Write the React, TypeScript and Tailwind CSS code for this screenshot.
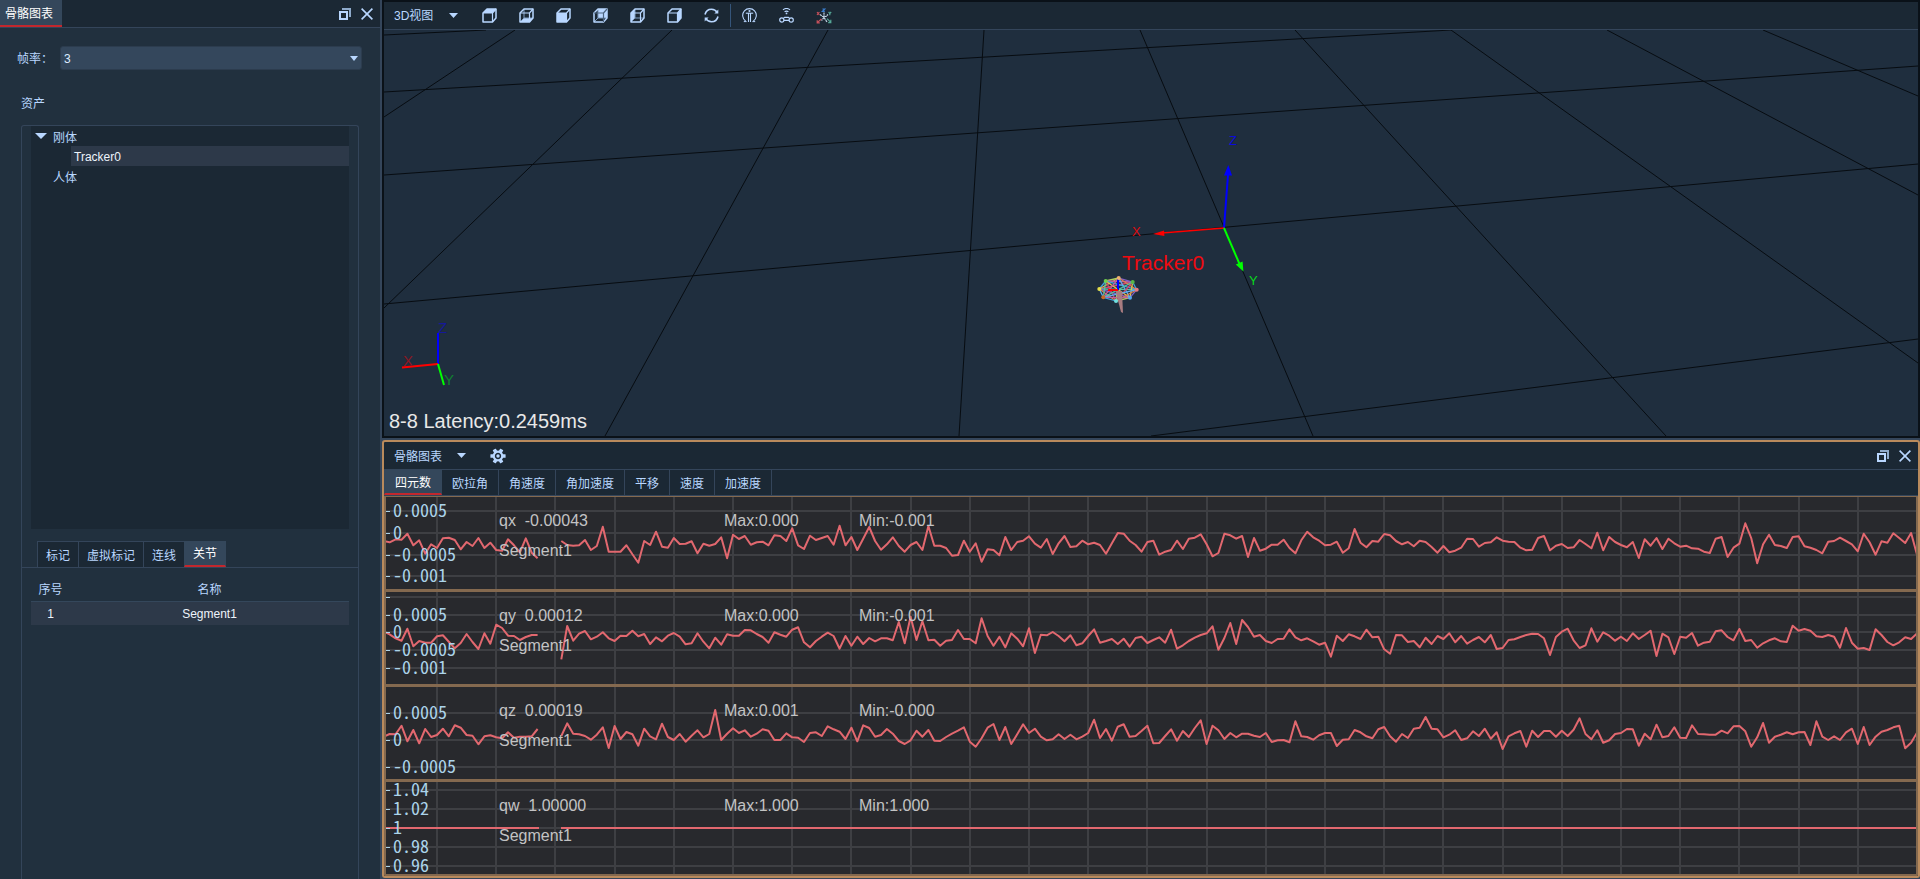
import type { ReactNode } from "react";

const QX_HEAD = [153,157,148,149,131,166,151,191,163,174,145,143,150,178,156,168,144,174,158,180,182,148,166,187,145,188,205];
const QX_TAIL = [
  153,165,167,166,150,180,168,110,185,185,185,166,193,218,153,165,125,170,173,144,162,161,154,190,161,167,162,142,205,134,
  147,138,164,157,155,166,136,138,153,115,166,177,137,150,144,138,164,107,166,141,180,146,111,153,179,163,142,168,185,165,
  156,180,108,167,167,174,197,195,152,185,160,215,178,180,196,141,180,156,152,139,161,173,147,192,160,138,171,169,152,163,
  158,165,191,160,129,131,152,165,185,156,152,194,185,180,152,177,146,143,133,163,199,189,131,136,146,138,201,144,182,176,
  164,164,149,174,190,151,125,142,152,166,164,155,188,175,117,158,172,153,155,132,136,153,163,156,169,152,156,171,188,168,
  187,182,173,146,147,170,159,157,142,152,155,156,173,181,179,144,138,181,167,162,174,172,150,162,175,128,181,141,156,165,
  172,156,204,148,167,144,177,146,160,170,167,175,176,185,189,146,141,201,173,161,100,144,220,163,134,165,168,174,141,139,
  169,173,180,190,155,153,143,153,163,184,131,157,194,154,158,130,144,159,129,194,
];
const QY_HEAD = [425,433,445,452,416,469,453,458,458,439,436,455,475,459,432,456,477,430,461,404,414,437,438,450,441,435,435];
const QY_TAIL = [
  508,408,452,431,423,448,440,427,445,453,437,438,422,439,432,462,442,454,437,429,440,463,460,430,455,475,443,464,433,437,
  437,420,421,432,441,458,427,434,440,419,412,457,472,453,440,428,438,476,438,467,440,462,444,454,445,445,451,396,460,380,
  450,394,451,449,467,452,450,420,447,447,460,385,438,467,440,472,430,446,469,415,489,434,436,426,438,454,436,466,460,438,
  418,458,453,447,462,446,470,444,440,459,450,442,458,419,476,466,453,443,435,430,409,479,444,399,462,390,411,440,435,453,
  459,447,446,418,442,451,445,454,464,458,500,437,453,433,439,447,419,442,440,478,491,435,436,456,453,472,443,462,438,447,
  430,457,438,461,450,441,457,435,477,474,450,448,441,435,431,432,445,495,441,425,416,451,474,466,415,455,427,437,452,440,
  453,430,447,435,422,498,431,442,492,440,443,429,467,458,455,424,421,441,451,417,453,450,473,460,451,445,454,456,407,422,
  417,422,439,441,435,440,473,414,458,476,474,480,418,435,456,466,457,442,447,430,
];
const QZ_HEAD = [170,162,163,137,184,150,190,147,171,165,146,169,136,143,165,167,193,169,166,172,175,157,173,170,170,169,147];
const QZ_TAIL = [
  168,130,161,163,168,179,164,142,204,138,177,156,163,197,146,169,178,131,171,180,162,185,167,151,172,162,90,180,161,145,
  159,151,170,161,148,152,180,180,160,172,173,186,159,157,168,139,148,155,177,143,184,136,144,170,165,147,161,183,192,181,
  152,170,150,182,183,171,161,152,142,185,200,175,143,132,180,141,192,163,133,159,146,170,181,178,163,177,164,178,170,159,
  119,174,147,182,140,133,170,168,153,137,190,189,168,148,182,153,171,144,121,192,137,151,177,159,172,161,161,167,171,159,
  186,181,180,187,124,169,171,179,166,159,159,198,179,178,150,157,169,175,148,141,169,185,162,174,146,143,111,146,148,172,
  164,151,180,175,154,168,146,176,157,207,169,160,153,200,152,171,153,153,170,152,168,149,115,162,178,151,188,181,162,159,
  147,148,197,161,178,134,172,168,142,173,174,136,162,163,164,164,152,160,139,138,154,200,172,129,188,170,164,157,163,157,
  156,195,124,170,180,169,180,157,146,192,141,195,170,155,150,142,137,205,188,158,
];

const GRID_X = Array.from({ length: 26 }, (_, i) => Math.round(51 + i * 59.2));
const STEP = 5.92;
const HEAD_X = 51 - 9 * STEP;
const TAIL_X = 51 + 21 * STEP;

type Tick = { y: number; label?: string };
type Channel = {
  name: string;
  value: string;
  max: string;
  min: string;
  ticks: Tick[];
  base: number;
  head?: number[];
  tail?: number[];
};

const CHANNELS: Channel[] = [
  {
    name: "qx", value: "-0.00043", max: "0.000", min: "-0.001", base: 21, head: QX_HEAD, tail: QX_TAIL,
    ticks: [{ y: 14, label: "0.0005" }, { y: 36, label: "0" }, { y: 58, label: "-0.0005" }, { y: 79, label: "-0.001" }],
  },
  {
    name: "qy", value: "0.00012", max: "0.000", min: "-0.001", base: 306, head: QY_HEAD, tail: QY_TAIL,
    ticks: [{ y: 5 }, { y: 23, label: "0.0005" }, { y: 40, label: "0" }, { y: 58, label: "-0.0005" }, { y: 76, label: "-0.001" }],
  },
  {
    name: "qz", value: "0.00019", max: "0.001", min: "-0.000", base: 21, head: QZ_HEAD, tail: QZ_TAIL,
    ticks: [{ y: 26, label: "0.0005" }, { y: 53, label: "0" }, { y: 80, label: "-0.0005" }],
  },
  {
    name: "qw", value: "1.00000", max: "1.000", min: "1.000", base: 0,
    ticks: [
      { y: 8, label: "1.04" }, { y: 27, label: "1.02" }, { y: 46, label: "1" }, { y: 65, label: "0.98" }, { y: 84, label: "0.96" },
    ],
  },
];

function linePoints(values: number[], startX: number, base: number) {
  return values.map((v, i) => `${(startX + i * STEP).toFixed(1)},${((v - base) / 3).toFixed(1)}`).join(" ");
}

function Chart({ channel }: { channel: Channel }) {
  const { name, value, max, min, ticks, base, head, tail } = channel;
  return (
    <div className="h-[95px] overflow-hidden border-x-2 border-t border-b-2 border-[#84694f] bg-[#28292d]">
      <svg className="block h-full w-full" role="img" aria-label={name}>
        <g stroke="#3e3f43" strokeWidth="2">
          {GRID_X.map((x) => (
            <line key={x} x1={x} x2={x} y1="0" y2="100%" />
          ))}
          {ticks.map((t) => (
            <line key={t.y} x1="0" x2="100%" y1={t.y} y2={t.y} />
          ))}
        </g>
        <g fill="none" stroke="#e2686f" strokeWidth="2" strokeLinejoin="round">
          {head && tail ? (
            <>
              <polyline points={linePoints(head, HEAD_X, base)} />
              <polyline points={linePoints(tail, TAIL_X, base)} />
            </>
          ) : (
            <>
              <line x1="0" x2="153" y1="46" y2="46" />
              <line x1="175" x2="100%" y1="46" y2="46" />
            </>
          )}
        </g>
        <g
          fill="#acd4ea"
          className="text-[18px] [font-family:'Noto_Sans_CJK_SC',monospace] [font-feature-settings:'hwid']"
        >
          {ticks.map((t) => (
            <g key={t.y}>
              <rect x="0" y={t.y} width="4" height="1" />
              {t.label && (
                <text x="7" y={t.y + 6}>
                  {t.label}
                </text>
              )}
            </g>
          ))}
        </g>
        <g fill="#c3c3c4" className="text-base [font-family:'Liberation_Sans',sans-serif]">
          <text x="113" y="29">{`${name}\u00a0\u00a0${value}`}</text>
          <text x="338" y="29">{`Max:${max}`}</text>
          <text x="473" y="29">{`Min:${min}`}</text>
          <text x="113" y="59">Segment1</text>
        </g>
      </svg>
    </div>
  );
}

function RestoreIcon() {
  return (
    <svg width="12" height="12" viewBox="0 0 12 12" fill="none">
      <path d="M3 1H11V9" stroke="#8fabcc" strokeWidth="2" />
      <rect x="1" y="4" width="7" height="7" stroke="#b9d7ff" strokeWidth="2" />
    </svg>
  );
}

function CloseIcon() {
  return (
    <svg width="12" height="12" viewBox="0 0 12 12" fill="none" stroke="#b9d7ff" strokeWidth="1.6">
      <path d="M.6 .6L11.4 11.4M11.4 .6L.6 11.4" />
    </svg>
  );
}

function Caret() {
  return (
    <svg width="9" height="5" viewBox="0 0 9 5" fill="#b9d7ff">
      <path d="M0 0H9L4.5 5Z" />
    </svg>
  );
}

function WindowButtons() {
  return (
    <div className="flex items-center gap-2.5">
      <button aria-label="还原" className="block">
        <RestoreIcon />
      </button>
      <button aria-label="关闭" className="block">
        <CloseIcon />
      </button>
    </div>
  );
}

const CUBE_FACES: Record<string, string> = {
  top: "M1 5L5 1H14L10.5 5Z",
  bottom: "M1 14L5 10H14L10.5 14Z",
  front: "M1 5H10.5V14H1Z",
  back: "M5 1H14V10H5Z",
  left: "M1 5L5 1V10L1 14Z",
  right: "M10.5 5L14 1V10L10.5 14Z",
};

function CubeIcon({ face }: { face: string }) {
  const hidden = face === "bottom" || face === "back" || face === "left";
  return (
    <svg width="15" height="15" viewBox="0 0 15 15" fill="none" stroke="#b9d7ff" strokeLinejoin="round">
      <path d={CUBE_FACES[face]} fill="#b9d7ff" stroke="none" />
      {hidden && <path d="M5 1V10H14M5 10L1 14" stroke="#7f9cc0" strokeWidth="1" />}
      <path d="M1 5L5 1H14V10L10.5 14H1Z" strokeWidth="1.5" />
      <path
        d="M1 5H10.5V14M10.5 5L14 1"
        strokeWidth="1.2"
        stroke={face === "back" ? "#4c6480" : "#b9d7ff"}
      />
    </svg>
  );
}

function RefreshIcon() {
  return (
    <svg width="15" height="15" viewBox="0 0 15 15" fill="none" stroke="#b9d7ff" strokeWidth="1.6">
      <path d="M1 6.5C1.8 3.2 4.5 1.2 7.5 1.2C10 1.2 12 2.5 13.3 4.6" />
      <path d="M14 8.5C13.2 11.8 10.5 13.8 7.5 13.8C5 13.8 3 12.5 1.7 10.4" />
      <path d="M14.3 1.6V5.4H10.4Z" fill="#b9d7ff" stroke="none" />
      <path d="M.7 13.4V9.6H4.6Z" fill="#b9d7ff" stroke="none" />
    </svg>
  );
}

function PoseIcon() {
  return (
    <svg width="15" height="15" viewBox="0 0 15 15" fill="none" stroke="#b9d7ff">
      <path d="M3.6 13A6.8 6.8 0 1 1 11.4 13" strokeWidth="1.1" />
      <path d="M1.8 13.6H4.6M13.2 13.6H10.4" strokeWidth="1" />
      <circle cx="7.5" cy="3" r="1.1" fill="#b9d7ff" stroke="none" />
      <path d="M3.8 5.2H11.2" strokeWidth="1.1" />
      <path d="M6.5 5V14M8.5 5V14" strokeWidth="1.1" />
    </svg>
  );
}

function TrackerIcon() {
  return (
    <svg width="15" height="15" viewBox="0 0 15 15" fill="none" stroke="#b9d7ff" strokeWidth="1.2">
      <path d="M4 1.9C6 .3 9 .3 11 1.9M5.6 3.8C6.8 2.8 8.2 2.8 9.4 3.8" />
      <circle cx="7.5" cy="5.4" r=".9" fill="#b9d7ff" stroke="none" />
      <circle cx="2.8" cy="12" r="2.1" />
      <circle cx="12.2" cy="12" r="2.1" />
      <path d="M4.4 10.4L5.6 9.4H9.4L10.6 10.4M5 12.4H10" />
    </svg>
  );
}

function SkeletonAxesIcon() {
  return (
    <svg width="16" height="16" viewBox="0 0 16 16" fill="none" strokeWidth="1.2">
      <path d="M8 4.5V9.5L11 14M8 9.5L5.5 12.5M4 6.5L6.5 8.5H10L12 6.5" stroke="#c3d4e4" strokeDasharray="2.2 .5" />
      <path d="M6.4 1H8.8L6.4 3.4H8.8" stroke="#3a7fd0" />
      <path d="M1 4L3.4 7M3.4 4L1 7M5.4 11L1.2 14.6M1.2 12.2V14.8H3.8" stroke="#c8515c" />
      <path d="M12.6 4L13.8 5.4L15.2 4M13.8 5.4V7.2M11 10.6L14.6 14.2M14.8 11.8V14.6H12.2" stroke="#56a898" />
    </svg>
  );
}

function GearIcon() {
  return (
    <svg width="16" height="16" viewBox="-8 -8 16 16">
      <g fill="#b9d7ff">
        {[0, 60, 120, 180, 240, 300].map((a) => (
          <rect key={a} x="-1.8" y="-7.6" width="3.6" height="4" rx=".5" transform={`rotate(${a + 30})`} />
        ))}
      </g>
      <circle r="4.3" fill="none" stroke="#b9d7ff" strokeWidth="2.2" />
      <circle r="1.7" fill="#b9d7ff" />
    </svg>
  );
}

const TOOLS: { label: string; icon: ReactNode; divided?: boolean }[] = [
  { label: "俯视图", icon: <CubeIcon face="top" /> },
  { label: "仰视图", icon: <CubeIcon face="bottom" /> },
  { label: "前视图", icon: <CubeIcon face="front" /> },
  { label: "后视图", icon: <CubeIcon face="back" /> },
  { label: "左视图", icon: <CubeIcon face="left" /> },
  { label: "右视图", icon: <CubeIcon face="right" /> },
  { label: "重置视图", icon: <RefreshIcon /> },
  { label: "人体姿态", icon: <PoseIcon />, divided: true },
  { label: "追踪器", icon: <TrackerIcon /> },
  { label: "骨骼坐标轴", icon: <SkeletonAxesIcon /> },
];

const FLOOR_LINES = [
  [384, 117, 515, 30], [384, 308, 672, 30], [605, 436, 828, 30], [959, 436, 984, 30], [1313, 436, 1140, 30],
  [1666, 436, 1295, 30], [1918, 363, 1451, 30], [1918, 195, 1607, 30], [1918, 96, 1763, 30],
  [384, 35, 486, 30], [384, 92, 1451, 30], [384, 175, 1918, 66], [384, 304, 1918, 164], [1151, 436, 1918, 339],
];

const MARKERS: [number, number, string][] = [
  [1099.3, 289, "#e6e04a"], [1105.7, 281, "#6fd24a"], [1118.7, 278, "#f0b070"], [1132.7, 282, "#58b848"],
  [1136.7, 289.7, "#e87a80"], [1130, 297.7, "#58a8f0"], [1116, 301, "#70e0e0"], [1103.3, 297.3, "#c86a28"],
];
const LINK_COLORS = ["#3fa0d8", "#e0c050", "#d04870", "#58c0a0", "#8060c8", "#e08050", "#60b0f0", "#b0d060", "#c060a0"];

function Scene() {
  const links = MARKERS.flatMap((a, i) => MARKERS.slice(i + 1).map((b) => [a, b] as const));
  return (
    <svg
      className="block h-full w-full"
      viewBox="384 30 1534 406"
      preserveAspectRatio="xMinYMin slice"
      role="img"
      aria-label="3D视图"
    >
      <g stroke="#070c11" strokeWidth="1">
        {FLOOR_LINES.map(([x1, y1, x2, y2], i) => (
          <line key={i} x1={x1} y1={y1} x2={x2} y2={y2} />
        ))}
      </g>
      <g strokeWidth="2">
        <path d="M1224 228L1228 175" stroke="#0000ff" />
        <path d="M1224 228L1162 233" stroke="#ff0000" strokeWidth="1.6" />
        <path d="M1224 228L1240 265" stroke="#00ff00" />
      </g>
      <path d="M1228.3 165L1232 175.5H1224Z" fill="#0000ff" />
      <path d="M1153 234L1164 230.6L1164.4 236Z" fill="#ff0000" />
      <path d="M1243.4 271.5L1235.8 264.4L1242.6 261.4Z" fill="#00ff00" />

      <g strokeWidth="1.3">
        {links.map(([a, b], i) => (
          <line key={i} x1={a[0]} y1={a[1]} x2={b[0]} y2={b[1]} stroke={LINK_COLORS[i % LINK_COLORS.length]} />
        ))}
      </g>
      <path d="M1115.5 291L1122 291L1123 313L1121 312Z" fill="#a87c80" />
      <path d="M1118 278V290" stroke="#0000ff" strokeWidth="2" />
      <path d="M1108 290H1118" stroke="#ff0000" strokeWidth="2" />
      {MARKERS.map(([x, y, color]) => (
        <circle key={color} cx={x} cy={y} r="2" fill={color} />
      ))}

      <g fill="none" strokeWidth="2">
        <path d="M438 364V333" stroke="#0000ff" />
        <path d="M438 364L402 367.5" stroke="#ff0000" />
        <path d="M438 364L444 385" stroke="#00ff00" />
      </g>
      <g className="[font-family:'Liberation_Sans',sans-serif]">
        <g className="text-[15px]">
          <text x="438" y="333" fill="#15189a">Z</text>
          <text x="403" y="366" fill="#8a1824">X</text>
          <text x="444" y="385" fill="#118030">Y</text>
        </g>
        <g className="text-[13px]">
          <text x="1229" y="145" fill="#0b0bdc">Z</text>
          <text x="1132" y="236" fill="#dd0c10">X</text>
          <text x="1249" y="285" fill="#08d81c">Y</text>
        </g>
        <text x="1122" y="270" fill="#f00a10" className="text-[21px]">Tracker0</text>
        <text x="389" y="428" fill="#e8e8e8" className="text-[20px]">8-8 Latency:0.2459ms</text>
      </g>
    </svg>
  );
}

const ASSET_TABS = ["标记", "虚拟标记", "连线", "关节"];
const CHART_TABS = ["四元数", "欧拉角", "角速度", "角加速度", "平移", "速度", "加速度"];

function AssetPanel() {
  return (
    <aside className="flex w-[382px] shrink-0 flex-col border-r-2 border-[#34455a] bg-[#21303e]">
      <header className="flex h-7 items-stretch justify-between border-b border-[#34455a] bg-[#1b2834] pr-[7px]">
        <h1 className="flex w-[62px] items-center border-b-2 border-[#c3272d] bg-[#34475b] pt-0.5 pl-[5px] text-white">骨骼图表</h1>
        <WindowButtons />
      </header>

      <div className="flex items-center pt-[18px] pr-[18px] pl-[17px]">
        <label htmlFor="rate" className="w-[43px] pt-0.5">帧率：</label>
        <div className="relative flex-1">
          <select
            id="rate"
            defaultValue="3"
            className="block h-6 w-full appearance-none rounded-[3px] border border-[#2c3c4e] bg-[#34475c] px-[3px] pt-0.5 text-[#dcebff] outline-none"
          >
            <option>1</option>
            <option>2</option>
            <option>3</option>
          </select>
          <svg className="pointer-events-none absolute top-2.5 right-1" width="8" height="5" viewBox="0 0 8 5" fill="#b9d7ff">
            <path d="M0 0H8L4 5Z" />
          </svg>
        </div>
      </div>

      <h2 className="mt-6 pt-px pl-[21px] leading-[18px]">资产</h2>

      <section className="mx-[21px] mt-3 flex flex-1 flex-col rounded-t-[3px] border border-b-0 border-[#34455a]">
        <ul className="mx-[9px] h-[403px] bg-[#1b2834]">
          <li>
            <button className="flex h-5 w-full items-center gap-1.5 pl-1">
              <svg width="12" height="6" viewBox="0 0 12 6" fill="#b9d7ff">
                <path d="M0 0H12L6 6Z" />
              </svg>
              <span className="pt-1">刚体</span>
            </button>
            <ul className="pl-10">
              <li>
                <button className="flex h-5 w-full items-center bg-[#2d3949] pt-0.5 pl-[3px] text-[#eef4fb]">Tracker0</button>
              </li>
            </ul>
          </li>
          <li>
            <button className="flex h-5 w-full items-center pt-1 pl-[22px]">人体</button>
          </li>
        </ul>

        <div role="tablist" className="mt-3 flex h-[27px] border-b border-[#34455a] pl-[15px]">
          {ASSET_TABS.map((tab, i) => (
            <button
              key={tab}
              role="tab"
              aria-selected={i === 3}
              className={
                i === 3
                  ? "border border-b-2 border-[#34475b] border-b-[#c3272d] bg-[#34475b] px-2 pt-px text-white"
                  : "border-t border-l border-[#34455a] bg-[#1b2834] px-2 pt-0.5"
              }
            >
              {tab}
            </button>
          ))}
        </div>

        <div className="mx-[9px] mt-[11px]">
          <table className="w-full border-collapse">
            <thead>
              <tr className="h-[22px] border-b border-[#34475b]">
                <th className="w-[39px] p-0 font-normal">序号</th>
                <th className="p-0 font-normal">名称</th>
              </tr>
            </thead>
            <tbody>
              <tr className="h-6 bg-[#2d3949] text-center text-[#eef4fb]">
                <td className="p-0 pt-0.5">1</td>
                <td className="p-0 pt-0.5">Segment1</td>
              </tr>
            </tbody>
          </table>
        </div>
      </section>
    </aside>
  );
}

function ViewPanel() {
  return (
    <section className="flex min-h-0 flex-1 flex-col border-2 border-[#0a1118]">
      <div className="flex h-7 shrink-0 items-stretch border-b border-[#34455a] bg-[#1b2834]">
        <button className="flex w-[87px] items-center gap-4 pl-2.5">
          3D视图
          <Caret />
        </button>
        {TOOLS.map((tool) => (
          <button
            key={tool.label}
            aria-label={tool.label}
            className={
              tool.divided
                ? "relative flex w-[38px] items-center justify-center before:absolute before:inset-y-0.5 before:left-0 before:w-px before:bg-[#35557a]"
                : "flex w-[37px] items-center justify-center"
            }
          >
            {tool.icon}
          </button>
        ))}
      </div>
      <div className="min-h-0 flex-1 bg-[#1f2e3e]">
        <Scene />
      </div>
    </section>
  );
}

function ChartPanel() {
  return (
    <section className="mt-0.5 mb-px shrink-0 overflow-hidden rounded-[3px] border-2 border-[#b98a5c] bg-[#1b2834]">
      <header className="flex h-7 items-center justify-between border-b border-[#34455a] pr-[7px] pl-2.5">
        <div className="flex items-center">
          <button className="flex items-center gap-[15px]">
            <span className="pt-0.5">骨骼图表</span>
            <Caret />
          </button>
          <button aria-label="设置" className="ml-6">
            <GearIcon />
          </button>
        </div>
        <WindowButtons />
      </header>
      <div role="tablist" className="flex h-[26px] border-b border-[#34455a]">
        {CHART_TABS.map((tab, i) => (
          <button
            key={tab}
            role="tab"
            aria-selected={i === 0}
            className={
              i === 0
                ? "border-x border-b-2 border-[#34475b] border-b-[#c3272d] bg-[#34475b] px-2.5 pt-0.5 text-white"
                : "border-r border-[#34455a] px-2.5 pt-0.5"
            }
          >
            {tab}
          </button>
        ))}
      </div>
      {CHANNELS.map((channel) => (
        <Chart key={channel.name} channel={channel} />
      ))}
    </section>
  );
}

export default function App() {
  return (
    <div className="flex min-h-screen bg-[#34455a] text-xs text-[#b9d7ff] [font-family:'Liberation_Sans','Noto_Sans_CJK_SC',sans-serif]">
      <AssetPanel />
      <main className="flex min-w-0 flex-1 flex-col">
        <ViewPanel />
        <ChartPanel />
      </main>
    </div>
  );
}
